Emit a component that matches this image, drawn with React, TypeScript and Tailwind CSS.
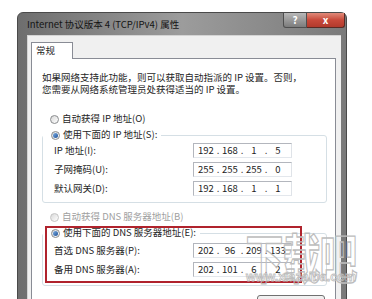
import React from "react";

const cjk = "font-['Noto_Sans_CJK_SC','Noto_Sans',sans-serif]";

function Radio({ checked = false, dim = false }: { checked?: boolean; dim?: boolean }) {
  return (
    <span
      className={`flex h-[9px] w-[9px] shrink-0 items-center justify-center rounded-full border ${
        dim ? "border-[#c4c4c4]" : "border-[#8a8c8e]"
      } bg-gradient-to-br from-[#d9d9d9] to-[#ffffff]`}
    >
      {checked && (
        <span className="h-[5px] w-[5px] rounded-full bg-gradient-to-br from-[#7fb0e6] to-[#1d4f94]" />
      )}
    </span>
  );
}

function IpBox({ parts }: { parts: string[] }) {
  return (
    <div className="flex h-[15px] w-[99px] items-center border border-[#b3b6bd] border-r-[#dfe3e8] border-b-[#e3e7ec] bg-white pl-[3px] text-[9.5px] leading-none text-[#222]">
      {parts.map((p, i) => (
        <React.Fragment key={i}>
          {i > 0 && <span className="w-[6px] text-center">.</span>}
          <span className="w-[18px] text-center">{p}</span>
        </React.Fragment>
      ))}
    </div>
  );
}

function Row({ label, parts }: { label: string; parts: string[] }) {
  return (
    <div className="flex h-[15px] items-center">
      <span className="w-[150px] pl-[11px] text-[9.5px] leading-none">{label}</span>
      <IpBox parts={parts} />
    </div>
  );
}

export default function App() {
  return (
    <div className={`relative h-[299px] w-[372px] overflow-hidden bg-white pl-[17px] pt-[12px] text-[#1e1e1e] ${cjk}`}>
      {/* window frame */}
      <div className="h-[300px] w-[330px] rounded-t-[6px] border border-[#4a4a4a] bg-gradient-to-r from-[#6e6e6e] via-[#9c9c9c] to-[#7a7a7a] pr-[5px] pl-[9px]">
        {/* title bar */}
        <div className="-mr-[4px] -ml-[8px] flex h-[22px] items-start">
          <span className="mt-[5px] pl-[8px] text-[9.5px] leading-[12px] text-[#141414]">
            Internet 协议版本 4 (TCP/IPv4) 属性
          </span>
          <div className="ml-auto flex">
            <div className="flex h-[15px] w-[24px] items-center justify-center rounded-bl-[3px] border border-t-0 border-[#4f4f4f] bg-gradient-to-b from-[#b8b8b8] to-[#7c7c7c] text-[10px] font-bold leading-none text-white">
              ?
            </div>
            <div className="flex h-[15px] w-[38px] items-center justify-center rounded-br-[3px] border border-t-0 border-l-0 border-[#5a2a24] bg-gradient-to-b from-[#e08a7a] via-[#c8493a] to-[#b23a2c] text-[10px] font-bold leading-none text-white">
              x
            </div>
          </div>
        </div>

        {/* dialog body */}
        <div className="h-[280px] border-t border-l border-[#d4d4d4] bg-[#f0f0f0] pt-[6px]">
          {/* tab */}
          <div className="relative z-10 -mb-px ml-[3px] flex h-[17px] w-[42px] items-center border border-b-0 border-[#898c95] bg-white pl-[4px] text-[9.5px] leading-none">
            常规
          </div>

          {/* tab page */}
          <div className="relative mr-[5px] ml-[3px] h-[260px] border border-[#898c95] bg-white pr-[8px] pl-[10px] pt-[12px]">
            <p className="text-[9.5px] leading-[12px]">
              如果网络支持此功能，则可以获取自动指派的 IP 设置。否则，
              <br />
              您需要从网络系统管理员处获得适当的 IP 设置。
            </p>

            <div className="mt-[18px] flex h-[12px] items-center gap-[3px] pl-[8px] text-[9.5px] leading-none">
              <Radio />
              <span>自动获得 IP 地址(O)</span>
            </div>

            <div className="mt-[10px] rounded-[3px] border border-[#d5dfe5] pb-[6px]">
              <div className="-mt-[7px] flex h-[12px] items-center">
                <div className="flex items-center gap-[3px] bg-white pr-[4px] pl-[8px] text-[9.5px] leading-none">
                  <Radio checked />
                  <span>使用下面的 IP 地址(S):</span>
                </div>
              </div>
              <div className="mt-[2px] flex flex-col gap-[4px]">
                <Row label="IP 地址(I):" parts={["192", "168", "1", "5"]} />
                <Row label="子网掩码(U):" parts={["255", "255", "255", "0"]} />
                <Row label="默认网关(D):" parts={["192", "168", "1", "1"]} />
              </div>
            </div>

            <div className="mt-[8px] flex h-[12px] items-center gap-[3px] pl-[8px] text-[9.5px] leading-none text-[#a0a0a0]">
              <Radio dim />
              <span>自动获得 DNS 服务器地址(B)</span>
            </div>

            <div className="mt-[10px] rounded-[3px] border border-[#d5dfe5] pb-[8px]">
              <div className="-mt-[7px] flex h-[12px] items-center">
                <div className="flex items-center gap-[3px] bg-white pr-[4px] pl-[8px] text-[9.5px] leading-none">
                  <Radio checked />
                  <span>使用下面的 DNS 服务器地址(E):</span>
                </div>
              </div>
              <div className="mt-[4px] flex flex-col gap-[4px]">
                <Row label="首选 DNS 服务器(P):" parts={["202", "96", "209", "133"]} />
                <Row label="备用 DNS 服务器(A):" parts={["202", "101", "6", "2"]} />
              </div>
            </div>

            <div className="mt-[9px] flex justify-end pr-[2px]">
              <div className="h-[22px] w-[68px] rounded-[3px] border border-[#707070] bg-gradient-to-b from-[#f2f2f2] to-[#dddddd]" />
            </div>

            {/* red highlight annotation */}
            <div className="absolute top-[167px] left-[13px] h-[57px] w-[257px] border-2 border-[#b0232d]" />
          </div>
        </div>
      </div>

      {/* watermark */}
      <div className="pointer-events-none absolute top-[230px] left-[244px] flex w-[114px] flex-col items-center">
        <span className="origin-top scale-y-[1.4] text-[38px] font-bold leading-none tracking-[-1px] text-transparent [-webkit-text-stroke:1px_#bdbdbd]">
          下载吧
        </span>
        <span className="mt-[3px] font-['Liberation_Sans',sans-serif] text-[12.5px] font-bold leading-none text-transparent [-webkit-text-stroke:0.8px_#bdbdbd]">
          www.xiazaiba.com
        </span>
      </div>
    </div>
  );
}
